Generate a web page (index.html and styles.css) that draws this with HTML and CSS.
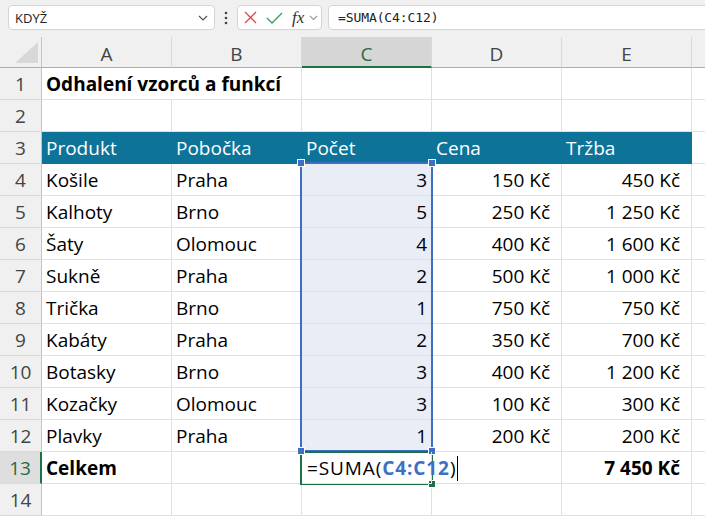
FILE: index.html
```html
<!DOCTYPE html>
<html lang="cs">
<head>
<meta charset="utf-8">
<title>Excel</title>
<link rel="stylesheet" href="styles.css">
</head>
<body>
<div class="app">
  <div class="toolbar">
    <div class="namebox">
      <span class="nb-text">KDYŽ</span>
      <svg class="chev" width="10" height="6" viewBox="0 0 10 6"><path d="M1 1 L5 5 L9 1" fill="none" stroke="#555" stroke-width="1.2"/></svg>
    </div>
    <div class="dots">
      <svg width="4" height="14" viewBox="0 0 4 14"><circle cx="2" cy="2" r="1.3" fill="#444"/><circle cx="2" cy="7" r="1.3" fill="#444"/><circle cx="2" cy="12" r="1.3" fill="#444"/></svg>
    </div>
    <div class="fnbox">
      <svg class="ic-x" width="13" height="13" viewBox="0 0 13 13"><path d="M1 1 L12 12 M12 1 L1 12" stroke="#e0464a" stroke-width="1.3" fill="none"/></svg>
      <svg class="ic-ok" width="17" height="12" viewBox="0 0 17 12"><path d="M1 6 L6 11 L16 1" stroke="#3a9d5a" stroke-width="1.3" fill="none"/></svg>
      <span class="fx">fx</span>
      <svg class="chev2" width="9" height="6" viewBox="0 0 9 6"><path d="M1 1 L4.5 4.5 L8 1" fill="none" stroke="#999" stroke-width="1.1"/></svg>
    </div>
    <div class="formula">=SUMA(C4:C12)</div>
  </div>

  <div class="sheet">
    <div class="corner"><svg width="23" height="21" viewBox="0 0 23 21"><path d="M23 0 L23 21 L0 21 Z" fill="#d8d8d8"/></svg></div>
    <div class="ch">A</div><div class="ch">B</div><div class="ch ch-sel">C</div><div class="ch">D</div><div class="ch">E</div><div class="ch ch-f"></div>

    <div class="rh">1</div><div class="c c-title b">Odhalení vzorců a funkcí</div><div class="c"></div><div class="c"></div><div class="c"></div><div class="c cf"></div>
    <div class="rh">2</div><div class="c"></div><div class="c"></div><div class="c"></div><div class="c"></div><div class="c"></div><div class="c cf"></div>
    <div class="rh">3</div><div class="c hd">Produkt</div><div class="c hd">Pobočka</div><div class="c hd">Počet</div><div class="c hd">Cena</div><div class="c hd">Tržba</div><div class="c cf"></div>

    <div class="rh">4</div><div class="c">Košile</div><div class="c">Praha</div><div class="c num sel">3</div><div class="c cur">150&nbsp;Kč</div><div class="c cur">450&nbsp;Kč</div><div class="c cf"></div>
    <div class="rh">5</div><div class="c">Kalhoty</div><div class="c">Brno</div><div class="c num sel">5</div><div class="c cur">250&nbsp;Kč</div><div class="c cur">1&nbsp;250&nbsp;Kč</div><div class="c cf"></div>
    <div class="rh">6</div><div class="c">Šaty</div><div class="c">Olomouc</div><div class="c num sel">4</div><div class="c cur">400&nbsp;Kč</div><div class="c cur">1&nbsp;600&nbsp;Kč</div><div class="c cf"></div>
    <div class="rh">7</div><div class="c">Sukně</div><div class="c">Praha</div><div class="c num sel">2</div><div class="c cur">500&nbsp;Kč</div><div class="c cur">1&nbsp;000&nbsp;Kč</div><div class="c cf"></div>
    <div class="rh">8</div><div class="c">Trička</div><div class="c">Brno</div><div class="c num sel">1</div><div class="c cur">750&nbsp;Kč</div><div class="c cur">750&nbsp;Kč</div><div class="c cf"></div>
    <div class="rh">9</div><div class="c">Kabáty</div><div class="c">Praha</div><div class="c num sel">2</div><div class="c cur">350&nbsp;Kč</div><div class="c cur">700&nbsp;Kč</div><div class="c cf"></div>
    <div class="rh">10</div><div class="c">Botasky</div><div class="c">Brno</div><div class="c num sel">3</div><div class="c cur">400&nbsp;Kč</div><div class="c cur">1&nbsp;200&nbsp;Kč</div><div class="c cf"></div>
    <div class="rh">11</div><div class="c">Kozačky</div><div class="c">Olomouc</div><div class="c num sel">3</div><div class="c cur">100&nbsp;Kč</div><div class="c cur">300&nbsp;Kč</div><div class="c cf"></div>
    <div class="rh">12</div><div class="c">Plavky</div><div class="c">Praha</div><div class="c num sel">1</div><div class="c cur">200&nbsp;Kč</div><div class="c cur">200&nbsp;Kč</div><div class="c cf"></div>
    <div class="rh rh-sel">13</div><div class="c b">Celkem</div><div class="c"></div><div class="c c-edit">=SUMA(<span class="ref">C4:C12</span>)<span class="caret"></span></div><div class="c"></div><div class="c cur b">7&nbsp;450&nbsp;Kč</div><div class="c cf"></div>
    <div class="rh">14</div><div class="c"></div><div class="c"></div><div class="c"></div><div class="c"></div><div class="c"></div><div class="c cf"></div>

    <div class="range"></div>
    <div class="active"></div>
    <div class="handle h-tl"></div>
    <div class="handle h-tr"></div>
    <div class="handle h-bl"></div>
    <div class="handle h-br"></div>
    <div class="fill-handle"></div>
  </div>
</div>
</body>
</html>
```

FILE: styles.css
```css
html, body {
  margin: 0;
  padding: 0;
  background: #ffffff;
}
.app {
  width: 705px;
  height: 516px;
  overflow: hidden;
  font-family: "Open Sans", "Noto Sans", sans-serif;
}

/* ---------- formula bar ---------- */
.toolbar {
  height: 37px;
  box-sizing: border-box;
  background: #f0f0f0;
  display: flex;
  align-items: flex-start;
  padding: 5px 0 0 8px;
}
.namebox {
  width: 207px;
  height: 25px;
  box-sizing: border-box;
  background: #fff;
  border: 1px solid #d5d5d5;
  border-radius: 4px;
  display: flex;
  align-items: center;
  justify-content: space-between;
  padding: 0 6px 0 6px;
}
.nb-text {
  font-size: 13px;
  color: #222;
}
.dots {
  width: 22px;
  height: 25px;
  display: flex;
  align-items: center;
  justify-content: center;
}
.fnbox {
  width: 85px;
  height: 25px;
  box-sizing: border-box;
  background: #fff;
  border: 1px solid #d5d5d5;
  border-radius: 4px;
  display: flex;
  align-items: center;
  padding-left: 6px;
}
.ic-ok {
  margin-left: 9px;
}
.fx {
  margin-left: 9px;
  font-family: "Liberation Serif", serif;
  font-style: italic;
  font-size: 17px;
  color: #333;
  line-height: 20px;
}
.chev2 {
  margin-left: 5px;
}
.formula {
  flex: 1;
  margin-left: 6px;
  margin-right: -20px;
  height: 25px;
  box-sizing: border-box;
  background: #fff;
  border: 1px solid #d5d5d5;
  border-radius: 4px;
  padding-left: 9px;
  font-family: "DejaVu Sans Mono", "Liberation Mono", monospace;
  font-size: 13px;
  line-height: 23px;
  color: #222;
  letter-spacing: -0.1px;
}

/* ---------- sheet grid ---------- */
.sheet {
  position: relative;
  display: grid;
  grid-template-columns: 42px repeat(5, 130px) 13px;
  grid-template-rows: 31px repeat(14, 32px);
  font-size: 19px;
  color: #000;
}
.corner, .ch, .rh, .c {
  box-sizing: border-box;
  min-width: 0;
}
.corner {
  background: #f0f0f0;
  border-right: 1px solid #c4c4c4;
  border-bottom: 1px solid #ababab;
  display: flex;
  align-items: flex-end;
  justify-content: flex-end;
  padding: 0 3px 4px 0;
}
.ch {
  background: #f0f0f0;
  border-right: 1px solid #dadada;
  border-bottom: 1px solid #ababab;
  text-align: center;
  color: #444;
  line-height: 30px;
  padding-top: 2px;
}
.ch-sel {
  background: #d6d6d6;
  color: #1c6e41;
  border-bottom: 2px solid #1e7145;
}
.ch-f {
  border-right: none;
}
.rh {
  background: #f0f0f0;
  border-right: 1px solid #c4c4c4;
  border-bottom: 1px solid #dadada;
  text-align: center;
  color: #444;
  line-height: 30px;
  padding-top: 1px;
}
.rh-sel {
  background: #dedede;
  color: #1c6e41;
  border-right: 2px solid #1e7145;
}
.c {
  border-right: 1px solid #e0e0e0;
  border-bottom: 1px solid #e0e0e0;
  padding: 1px 4px 0 4px;
  line-height: 30px;
  white-space: nowrap;
}
.cf {
  border-right: none;
}
.c-title {
  grid-column: span 2;
}
.b {
  font-weight: 700;
}
.hd {
  background: #0e7399;
  border-color: #0e7399;
  color: #fff;
}
.num {
  text-align: right;
}
.cur {
  text-align: right;
  padding-right: 11px;
}
.sel {
  background: #e9edf6;
}
.c-edit {
  overflow: visible;
  position: relative;
  z-index: 4;
  padding-left: 5px;
  letter-spacing: 0.9px;
}
.ref {
  color: #3d6fc5;
  font-weight: 700;
}
.caret {
  display: inline-block;
  width: 1px;
  height: 25px;
  background: #000;
  margin-left: 1px;
  vertical-align: -6px;
}

/* ---------- selection overlays ---------- */
.range {
  position: absolute;
  left: 300px;
  top: 125px;
  width: 133px;
  height: 290px;
  box-sizing: border-box;
  border: 2px solid #3f6fc4;
  pointer-events: none;
}
.active {
  position: absolute;
  left: 300px;
  top: 414px;
  width: 133px;
  height: 34px;
  box-sizing: border-box;
  border: 2px solid #1e7145;
  pointer-events: none;
  z-index: 2;
}
.handle {
  position: absolute;
  width: 6px;
  height: 6px;
  box-sizing: border-box;
  background: #3f6fc4;
  outline: 1px solid #fff;
  z-index: 3;
}
.h-tl { left: 298px; top: 123px; }
.h-tr { left: 429px; top: 123px; }
.h-bl { left: 298px; top: 411px; }
.h-br { left: 429px; top: 411px; }
.fill-handle {
  position: absolute;
  left: 429px;
  top: 444px;
  width: 6px;
  height: 6px;
  background: #1e7145;
  outline: 1px solid #fff;
  z-index: 3;
}
```
